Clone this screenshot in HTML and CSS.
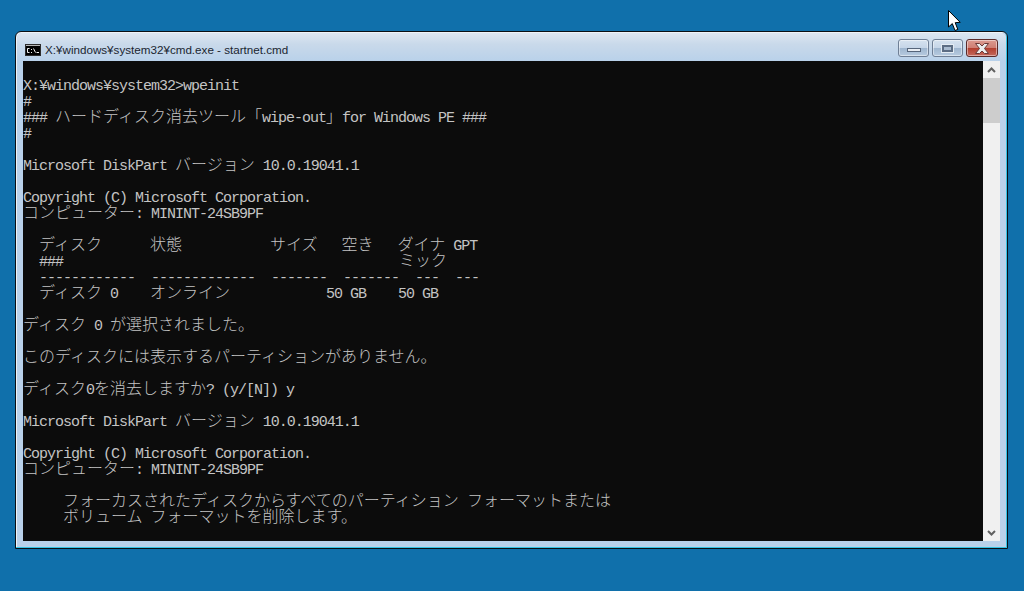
FILE: index.html
```html
<!DOCTYPE html>
<html lang="ja">
<head>
<meta charset="utf-8">
<title>cmd.exe</title>
<link rel="stylesheet" href="styles.css">
</head>
<body>
<div class="window">
  <div class="titlebar">
    <svg class="appicon" width="16" height="12" viewBox="0 0 16 12"><rect x="0" y="0" width="16" height="12" fill="#2c2c2c"/><rect x="1" y="1" width="14" height="1" fill="#b5b5b5"/><rect x="1" y="2" width="14" height="9" fill="#000"/><path d="M4.5 4.5H2.5V8.5H4.5M6.5 5V6M6.5 8V9M8.5 4.5L10.5 8.5M11.5 8.5H14" fill="none" stroke="#f0f0f0" stroke-width="1"/></svg>
    <span class="title">X:¥windows¥system32¥cmd.exe - startnet.cmd</span>
    <div class="controls">
      <div class="btn"><span class="glyph-min"></span></div>
      <div class="btn"><span class="glyph-max"></span></div>
      <div class="btn close"><svg width="18" height="11" viewBox="0 0 18 11"><path d="M2.5 0.5H6.5L9 3L11.5 0.5H15.5L11.5 5.5L15.5 10.5H11.5L9 8L6.5 10.5H2.5L6.5 5.5Z" fill="#ececec" stroke="#6a3a38" stroke-width="1"/></svg></div>
    </div>
  </div>
  <div class="client">
    <div class="console">
<div class="line"> </div>
<div class="line">X:¥windows¥system32&gt;wpeinit</div>
<div class="line">#</div>
<div class="line">### <span class="jp">ハードディスク消去ツール「</span>wipe-out<span class="jp">」</span>for Windows PE ###</div>
<div class="line">#</div>
<div class="line"> </div>
<div class="line">Microsoft DiskPart <span class="jp">バージョン</span> 10.0.19041.1</div>
<div class="line"> </div>
<div class="line">Copyright (C) Microsoft Corporation.</div>
<div class="line"><span class="jp">コンピューター</span>: MININT-24SB9PF</div>
<div class="line"> </div>
<div class="line">  <span class="jp">ディスク</span>      <span class="jp">状態</span>           <span class="jp">サイズ</span>   <span class="jp">空き</span>   <span class="jp">ダイナ</span> GPT</div>
<div class="line">  ###                                          <span class="jp">ミック</span></div>
<div class="line">  ------------  -------------  -------  -------  ---  ---</div>
<div class="line">  <span class="jp">ディスク</span> 0    <span class="jp">オンライン</span>            50 GB    50 GB</div>
<div class="line"> </div>
<div class="line"><span class="jp">ディスク</span> 0 <span class="jp">が選択されました。</span></div>
<div class="line"> </div>
<div class="line"><span class="jp">このディスクには表示するパーティションがありません。</span></div>
<div class="line"> </div>
<div class="line"><span class="jp">ディスク</span>0<span class="jp">を消去しますか</span>? (y/[N]) y</div>
<div class="line"> </div>
<div class="line">Microsoft DiskPart <span class="jp">バージョン</span> 10.0.19041.1</div>
<div class="line"> </div>
<div class="line">Copyright (C) Microsoft Corporation.</div>
<div class="line"><span class="jp">コンピューター</span>: MININT-24SB9PF</div>
<div class="line"> </div>
<div class="line">     <span class="jp">フォーカスされたディスクからすべてのパーティション</span> <span class="jp">フォーマットまたは</span></div>
<div class="line">     <span class="jp">ボリューム</span> <span class="jp">フォーマットを削除します。</span></div>
    </div>
    <div class="scrollbar">
      <div class="arrow"><svg width="9" height="6" viewBox="0 0 9 6"><path d="M1 5L4.5 1.5L8 5" fill="none" stroke="#606060" stroke-width="2"/></svg></div>
      <div class="track"><div class="thumb"></div></div>
      <div class="arrow"><svg width="9" height="6" viewBox="0 0 9 6"><path d="M1 1L4.5 4.5L8 1" fill="none" stroke="#606060" stroke-width="2"/></svg></div>
    </div>
  </div>
</div>
<svg class="cursor" width="13" height="22" viewBox="0 0 13 22"><path d="M0.5 0.5V17L4.3 13.6L7 20.5L9.8 19.4L7.2 12.7L12.2 12.3Z" fill="#fff" stroke="#000" stroke-width="1"/></svg>
</body>
</html>
```
FILE: styles.css
```css
html, body {
  margin: 0;
  height: 100%;
  overflow: hidden;
}
body {
  background: #1070ab;
  position: relative;
}
.window {
  position: absolute;
  left: 15px;
  top: 31px;
  width: 977px;
  height: 509px;
  border: 1px solid #0a0f14;
  border-radius: 6px 6px 0 0;
  box-shadow: inset -1px -1px 0 #35c4e4, inset 1px 1px 0 #eef3f8;
  background: #b9d1ea;
  display: flex;
  flex-direction: column;
  padding: 0 7px 7px;
}
.titlebar {
  box-sizing: border-box;
  height: 28px;
  flex: none;
  display: flex;
  align-items: center;
  margin: 1px -6px 0;
  padding: 6px 8px 0 8px;
  background: linear-gradient(to bottom, #dce6f1 0%, #c9d9ea 40%, #b9d1ea 100%);
  border-radius: 5px 5px 0 0;
}
.appicon {
  flex: none;
  margin-right: 4px;
}
.title {
  font: 11.65px/16px "Liberation Sans", sans-serif;
  color: #1a2530;
  white-space: nowrap;
}
.controls {
  margin-left: auto;
  margin-top: -4px;
  display: flex;
  gap: 3px;
}
.btn {
  width: 29px;
  height: 16px;
  border: 1px solid #6f7f95;
  border-radius: 3px;
  background: linear-gradient(to bottom, #d6e2ef 0%, #c6d6e8 48%, #9fb6cf 52%, #b7cbe0 100%);
  box-shadow: inset 0 0 0 1px rgba(255,255,255,.45);
  display: flex;
  align-items: center;
  justify-content: center;
}
.close {
  width: 30px;
  border-color: #5a2a2a;
  background: linear-gradient(to bottom, #dc9a90 0%, #cf7f74 48%, #b33f2f 52%, #c4685c 100%);
}
.glyph-min {
  width: 12px;
  height: 2px;
  margin-top: 3px;
  background: #e9eef4;
  border: 1px solid #56657a;
}
.glyph-max {
  width: 7px;
  height: 3px;
  background: #a9bbd0;
  border: 2px solid #5c6d84;
  box-shadow: 0 0 0 1px #e3ebf3;
}
.client {
  flex: 1;
  min-height: 0;
  display: flex;
  background: #0c0c0c;
}
.console {
  flex: 1;
  overflow: hidden;
  padding-top: 2px;
  color: #c4c4c4;
  font-family: "Liberation Mono", monospace;
  font-size: 15px;
  letter-spacing: -1px;
}
.line {
  height: 16px;
  line-height: 16px;
  white-space: pre;
}
.jp {
  font-family: "Noto Sans CJK JP", sans-serif;
  font-size: 16px;
  font-weight: 300;
  letter-spacing: 0;
  line-height: 1px;
}
.scrollbar {
  flex: none;
  width: 17px;
  background: #f0f0f0;
  display: flex;
  flex-direction: column;
}
.arrow {
  height: 17px;
  display: flex;
  align-items: center;
  justify-content: center;
  flex: none;
}
.track {
  flex: 1;
}
.thumb {
  height: 45px;
  background: #cdcdcd;
}
.cursor {
  position: absolute;
  left: 948px;
  top: 10px;
}
```
